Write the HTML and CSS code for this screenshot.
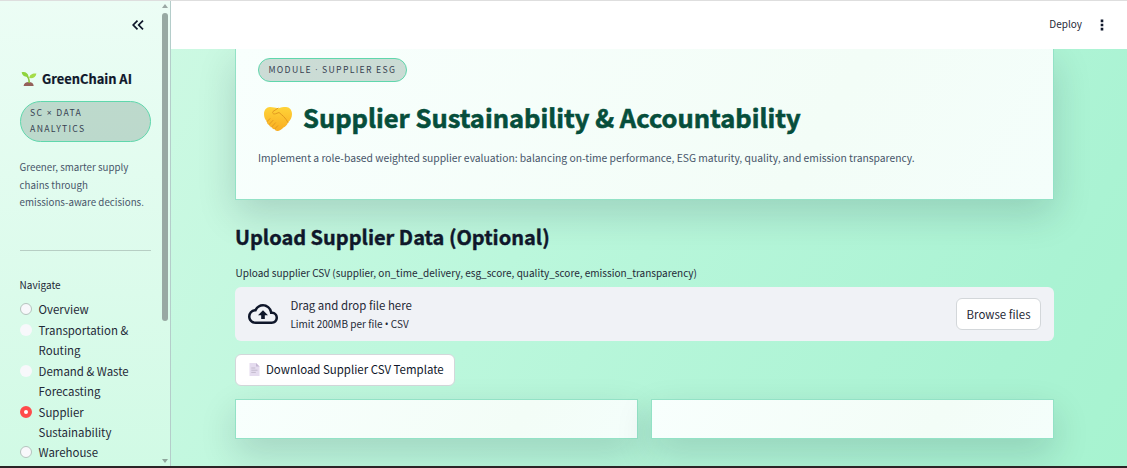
FILE: index.html
```html
<!DOCTYPE html>
<html lang="en">
<head>
  <meta charset="UTF-8">
  <title>GreenChain AI</title>
  <link rel="stylesheet" href="styles.css">
</head>
<body>
  <div class="app">
    <aside class="sidebar">
      <div class="sidebar-body">
        <button class="collapse" aria-label="Collapse sidebar">
          <svg width="14" height="12" viewBox="0 0 14 12"><path d="M6.5 1.6 2.2 6l4.3 4.4M12 1.6 7.7 6l4.3 4.4"/></svg>
        </button>
        <h3 class="brand">
          <svg class="sprout" width="16" height="16" viewBox="0 0 16 16">
            <path d="M2.600 15c.2-2.600 2.200-4 5.200-4s4.700 1.500 4.900 4z" fill="#95605a"/>
            <path d="M8.200 12C8.400 9 7.600 6.500 5.500 4.300" fill="none" stroke="#8cc63c" stroke-width="1.400"/>
            <path d="M.6 1.200c3.400-.9 6.300.5 7 4.400C4.200 6.400 1.300 4.800.6 1.200z" fill="#8fd43d"/>
            <path d="M15.400 2.500c-.4 3.700-3.400 5.300-7.200 4.600C8.300 3.500 11.900 1.900 15.400 2.500z" fill="#a5dc48"/>
          </svg>
          <span>GreenChain AI</span>
        </h3>
        <div class="pill side-pill">SC <span class="sym">×</span> Data<br>Analytics</div>
        <p class="tagline">Greener, smarter supply<br>chains through<br>emissions-aware decisions.</p>
        <hr class="divider">
        <div class="nav-label">Navigate</div>
        <nav class="nav">
          <label class="nav-item"><i class="radio ring"></i><span>Overview</span></label>
          <label class="nav-item"><i class="radio"></i><span>Transportation &amp;<br>Routing</span></label>
          <label class="nav-item"><i class="radio"></i><span>Demand &amp; Waste<br>Forecasting</span></label>
          <label class="nav-item"><i class="radio checked"></i><span>Supplier<br>Sustainability</span></label>
          <label class="nav-item"><i class="radio ring"></i><span>Warehouse</span></label>
        </nav>
      </div>
      <div class="scrollbar">
        <i class="arrow up"></i>
        <i class="thumb"></i>
        <i class="arrow down"></i>
      </div>
    </aside>

    <div class="main">
      <header class="toolbar">
        <span class="deploy">Deploy</span>
        <svg width="4" height="12" viewBox="0 0 4 12"><path d="M.7.600h2.600v2.600H.7zM.7 4.700h2.600v2.600H.7zM.7 8.800h2.600v2.600H.7z" fill="#0f172a"/></svg>
      </header>
      <main class="content">
        <section class="card hero">
          <div class="pill">Module <span class="sym">·</span> Supplier ESG</div>
          <h1 class="title">
            <svg class="handshake" width="30" height="26" viewBox="0 0 30 26">
              <defs>
                <linearGradient id="skin" x1="0" y1="0" x2="0" y2="1">
                  <stop offset="0" stop-color="#ffd338"/>
                  <stop offset="1" stop-color="#f9ad22"/>
                </linearGradient>
              </defs>
              <path d="M1 8C1 4 3.500 1 7 1c3 0 5.200.8 8 1.200C18 1.500 20 1 23 1c3.500 0 6 3 6 7 0 3.500-1.500 6.500-4 8.500-.8 2.500-2.500 4-4.500 5-1.700 1.800-3.500 3-5.500 3.500-2 .2-3-.8-3.300-2-1.500.3-2.700-.6-3-2-1.500 0-2.600-.9-2.700-2.400-1.500-.3-2.400-1.400-2-3C2 13.500 1 11 1 8z" fill="url(#skin)"/>
              <path d="M15 2.200 10 5.500c-1.200 1.500.5 3 2.500 2.300l3.500-1.300c3 2.500 6.500 5 9 10M4 15.600l3-3M6 18.600l4-4.200M8.700 21l3.800-4.200M11.700 23l3-3.200" fill="none" stroke="#e39a20" stroke-width="1" stroke-linecap="round"/>
            </svg>
            <span>Supplier Sustainability &amp; Accountability</span>
          </h1>
          <p class="lead">Implement a role-based weighted supplier evaluation: balancing on-time performance, ESG maturity, quality, and emission transparency.</p>
        </section>

        <h2 class="section-title">Upload Supplier Data (Optional)</h2>
        <div class="field-label">Upload supplier CSV (supplier, on_time_delivery, esg_score, quality_score, emission_transparency)</div>
        <div class="dropzone">
          <svg class="cloud" width="30" height="20" viewBox="0 0 24 16"><path d="M19.350 6.040A7.490 7.490 0 0 0 12 0C9.110 0 6.600 1.640 5.350 4.040A5.994 5.994 0 0 0 0 10c0 3.310 2.690 6 6 6h13c2.760 0 5-2.240 5-5 0-2.640-2.050-4.780-4.650-4.960zM19 14H6c-2.210 0-4-1.790-4-4 0-2.050 1.530-3.760 3.560-3.970l1.070-.11.500-.95A5.469 5.469 0 0 1 12 2c2.620 0 4.880 1.860 5.390 4.430l.3 1.500 1.530.11A2.980 2.980 0 0 1 22 11c0 1.650-1.350 3-3 3zM8 9h2.550v3h2.900V9H16l-4-4z" fill="#0f172a"/></svg>
          <div class="drop-text">
            <div class="drop-main">Drag and drop file here</div>
            <div class="drop-hint">Limit 200MB per file <span class="sym">•</span> CSV</div>
          </div>
          <button class="btn">Browse files</button>
        </div>
        <button class="btn download">
          <svg width="11" height="13" viewBox="0 0 11 13">
            <path d="M.5 0H7l3.500 3.500V13H.5z" fill="#e5dcef"/>
            <path d="M7 0v3.500h3.500z" fill="#c5b8d4"/>
            <path d="M2.300 5h4M2.300 7.200h6.200M2.300 9.400h4.500" stroke="#c3bacd" stroke-width="1"/>
          </svg>
          <span>Download Supplier CSV Template</span>
        </button>
        <div class="row">
          <section class="card"></section>
          <section class="card"></section>
        </div>
      </main>
    </div>
  </div>
</body>
</html>
```
FILE: styles.css
```css
* {
  box-sizing: border-box;
}
body {
  margin: 0;
  font-family: "Noto Sans CJK SC", "Noto Sans", sans-serif;
  font-size: 11.45px;
  color: #1f2937;
  overflow: hidden;
}
h1, h2, h3, p {
  margin: 0;
}
.sym {
  font-family: "Open Sans", sans-serif;
  line-height: 1;
}
.app {
  display: flex;
  height: 468px;
  border-top: 1px solid #dedede;
  border-bottom: 2px solid #2b2426;
  background: #bbf7dc;
}

/* sidebar */
.sidebar {
  display: flex;
  width: 171px;
  flex: none;
  border-right: 1px solid #b4cdca;
  background: linear-gradient(180deg, #ecfdf5, #d1fae5);
}
.sidebar-body {
  flex: 1;
  padding: 17px 10px 0 19.6px;
  overflow: hidden;
}
.collapse {
  display: block;
  height: 14px;
  margin: 0 5px 0 auto;
  padding: 0;
  border: 0;
  background: none;
}
.collapse svg {
  display: block;
  fill: none;
  stroke: #0f172a;
  stroke-width: 1.7;
}
.brand {
  display: flex;
  align-items: center;
  gap: 5px;
  height: 24px;
  margin-top: 35px;
  font-size: 12.9px;
  line-height: 24px;
  color: #0f172a;
  white-space: nowrap;
  -webkit-text-stroke: 0.2px;
}
.sprout {
  margin-left: 1.4px;
}
.pill {
  width: max-content;
  height: 24px;
  padding: 3px 9.5px;
  border: 1px solid #5fd7ac;
  border-radius: 999px;
  background: rgba(15, 70, 50, 0.19);
  font-size: 8.7px;
  line-height: 16px;
  letter-spacing: 1.31px;
  text-transform: uppercase;
  color: #374151;
}
.side-pill {
  width: 131px;
  height: 41px;
  margin-top: 10px;
}
.tagline {
  margin-top: 17px;
  font-size: 9.75px;
  line-height: 17.6px;
  color: #475569;
  white-space: nowrap;
}
.divider {
  width: 131px;
  margin: 38px 0 0;
  border: 0;
  border-top: 1px solid #b7cec4;
}
.nav-label {
  margin-top: 25px;
  font-size: 10.03px;
  line-height: 18px;
}
.nav {
  margin-top: 5.5px;
}
.nav-item {
  display: flex;
  gap: 7px;
  margin-bottom: 0.6px;
  line-height: 20.1px;
  white-space: nowrap;
}
.radio {
  width: 12px;
  height: 12px;
  margin-top: 4px;
  flex: none;
  border-radius: 50%;
  background: #f8f8fb;
}
.radio.ring {
  border: 1px solid #b5c4be;
}
.radio.checked {
  border: 4px solid #ff4b4b;
  background: #fff;
}
.scrollbar {
  display: flex;
  flex-direction: column;
  align-items: center;
  width: 10px;
  padding: 3px 0;
}
.arrow {
  border: 3px solid transparent;
}
.arrow.up {
  border-top: 0;
  border-bottom: 4px solid #9ba8a4;
}
.arrow.down {
  margin-top: auto;
  border-bottom: 0;
  border-top: 4px solid #8fa69c;
}
.thumb {
  width: 6px;
  height: 308px;
  margin-top: 5px;
  border-radius: 3px;
  background: #98a9a3;
}

/* main area */
.main {
  display: flex;
  flex: 1;
  flex-direction: column;
  overflow: hidden;
  background: linear-gradient(120deg, #cdf9e3 0%, #bbf7dc 40%, #aaf3d3 85%, #a7f3d0 100%);
}
.toolbar {
  position: relative;
  z-index: 1;
  display: flex;
  align-items: center;
  justify-content: flex-end;
  gap: 18px;
  flex: none;
  height: 48px;
  padding-right: 23px;
  background: #fff;
}
.deploy {
  padding-bottom: 3px;
  font-size: 10px;
}
.content {
  padding: 0 73px 0 64px;
}
.card {
  border: 1px solid #93e2c6;
  background: linear-gradient(120deg, #f8fffd, #f3fdf7 70%, #f4fefb);
  box-shadow: 0 14px 36px rgba(15, 23, 42, 0.16);
}
.hero {
  height: 151px;
  padding: 9px 22px 0;
  border-top: 0;
}
.title {
  display: flex;
  align-items: center;
  gap: 10px;
  height: 40px;
  margin-top: 17px;
  padding-left: 5px;
  font-size: 25.5px;
  color: #064e3b;
  white-space: nowrap;
  -webkit-text-stroke: 0.6px;
}
.title span {
  line-height: 36px;
  padding-bottom: 4px;
}
.lead {
  margin-top: 9px;
  font-size: 10.32px;
  line-height: 20px;
  color: #475569;
  white-space: nowrap;
}
.section-title {
  margin-top: 22px;
  font-size: 20px;
  line-height: 30px;
  color: #0f172a;
  -webkit-text-stroke: 0.4px;
}
.field-label {
  margin-top: 12px;
  padding-left: 0.5px;
  font-size: 10.03px;
  line-height: 18px;
}
.dropzone {
  display: flex;
  align-items: center;
  height: 54px;
  margin-top: 5px;
  padding: 0 13px;
  border-radius: 6px;
  background: #f0f2f6;
}
.drop-text {
  flex: 1;
  margin-left: 12.4px;
}
.drop-main {
  margin-top: -1px;
  line-height: 20px;
}
.drop-hint {
  font-size: 10.03px;
  line-height: 18px;
}
.btn {
  height: 32px;
  padding: 0 9.5px 1px;
  border: 1px solid #d3d7da;
  border-radius: 6px;
  background: #fff;
  font: inherit;
  color: inherit;
  white-space: nowrap;
}
.download {
  display: flex;
  align-items: center;
  gap: 6px;
  margin-top: 13px;
  padding: 0 10px 2px 13px;
  color: #0f172a;
}
.row {
  display: flex;
  gap: 13px;
  margin-top: 13px;
}
.row .card {
  flex: 1;
  height: 40px;
}
```
